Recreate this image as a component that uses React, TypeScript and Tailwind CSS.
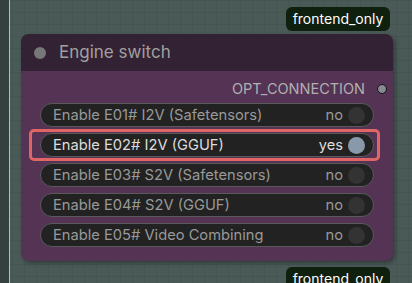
import React from "react";

const rows = [
  { label: "Enable E01# I2V (Safetensors)", on: false },
  { label: "Enable E02# I2V (GGUF)", on: true },
  { label: "Enable E03# S2V (Safetensors)", on: false },
  { label: "Enable E04# S2V (GGUF)", on: false },
  { label: "Enable E05# Video Combining", on: false },
];

function Badge() {
  return (
    <div className="shrink-0 h-[24px] w-[104px] rounded-[6px] bg-[#10200f] text-white text-[14px] leading-[24px] text-center">
      frontend_only
    </div>
  );
}

export default function App() {
  return (
    <div
      className="w-[412px] h-[283px] overflow-hidden flex font-['Inter','Liberation_Sans',Arial,sans-serif] bg-[#4a5a57]"
      style={{
        backgroundImage:
          "linear-gradient(to right, rgba(0,0,0,0.06) 1px, transparent 1px), linear-gradient(to bottom, rgba(0,0,0,0.06) 1px, transparent 1px)",
        backgroundSize: "12px 12px",
      }}
    >
      <div className="w-[9px] h-full bg-[#34413f]" />
      <div className="w-[1px] h-full bg-[#9fc6c4]" />
      <div className="flex-1 flex flex-col pl-[11px] pt-[7px]">
        <div className="flex justify-end w-[369px] shrink-0">
          <Badge />
        </div>
        <div className="shrink-0 mt-[3px] w-[372px] h-[227px] rounded-[8px] bg-[#553355] shadow-[2px_2px_4px_rgba(0,0,0,0.35)] overflow-hidden flex flex-col">
          <div className="h-[37px] bg-[#332233] flex items-center pl-[13px]">
            <div className="w-[12px] h-[12px] rounded-full bg-[#777777]" />
            <span className="ml-[13px] text-[17px] text-[#a0a0a0]">Engine switch</span>
          </div>
          <div className="flex items-center justify-end h-[24px] pr-[6px] mt-[6px]">
            <span className="text-[14.5px] text-[#b0b0b0]">OPT_CONNECTION</span>
            <div className="ml-[12px] w-[10px] h-[10px] rounded-full bg-[#888a92] border border-[#111]" />
          </div>
          <div className="flex flex-col gap-[6px] mt-[2px] px-[19px]">
            {rows.map((r) => (
              <div key={r.label} className="relative">
                {r.on && (
                  <div className="absolute left-[-11px] right-[-6px] top-[-4px] bottom-[-4px] rounded-[5px] border-[3px] border-[#e06666]" />
                )}
                <div className="relative h-[24px] rounded-full bg-[#222222] border border-[#5a5a5a] flex items-center pl-[12px] pr-[8px]">
                  <span className={`flex-1 text-[14.7px] ${r.on ? "text-[#dddddd]" : "text-[#999999]"}`}>{r.label}</span>
                  <span className={`text-[14.7px] ${r.on ? "text-[#dddddd]" : "text-[#999999]"}`}>{r.on ? "yes" : "no"}</span>
                  <div className={`ml-[5px] w-[17px] h-[17px] rounded-full ${r.on ? "bg-[#8899aa]" : "bg-[#333333]"}`} />
                </div>
              </div>
            ))}
          </div>
        </div>
        <div className="flex justify-end w-[369px] mt-[6px] shrink-0">
          <Badge />
        </div>
      </div>
    </div>
  );
}
